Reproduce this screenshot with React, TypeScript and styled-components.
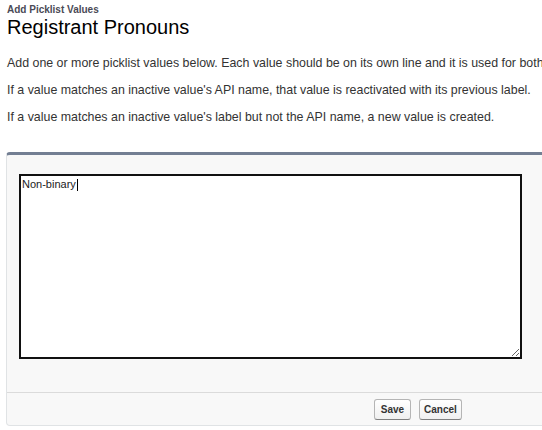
import { FC } from 'react';
import styled, { createGlobalStyle } from 'styled-components';

const GlobalStyle = createGlobalStyle`
  html, body {
    margin: 0;
    padding: 0;
    background: #fff;
  }
  body {
    font-family: 'Liberation Sans', Arial, sans-serif;
    font-size: 12px;
    color: #333;
    overflow: hidden;
  }
`;

const Page = styled.div`
  width: 542px;
  height: 430px;
  overflow: hidden;
`;

const Header = styled.div`
  padding: 4px 0 0 7px;
`;

const PageType = styled.h1`
  margin: 0;
  font-size: 10px;
  font-weight: bold;
  line-height: 11px;
  color: #4a4a56;
`;

const PageTitle = styled.h2`
  margin: 0;
  font-size: 20px;
  font-weight: normal;
  line-height: 24px;
  color: #000;
`;

const Intro = styled.div`
  padding: 17px 0 0 7px;
`;

const Line = styled.p`
  margin: 0 0 13px;
  line-height: 14px;
  font-size: 12.4px;
  white-space: nowrap;
  color: #333;

  &:last-child {
    margin-bottom: 0;
  }
`;

const Panel = styled.div`
  margin: 28px -20px 0 6px;
  background: #f8f8f8;
  border: 1px solid #e0e3e5;
  border-top: 3px solid #737f93;
  border-radius: 4px;
`;

const PanelBody = styled.div`
  padding: 19px 12px 33px;
  border-bottom: 1px solid #dbdbdb;
`;

const Field = styled.div`
  position: relative;
  width: 503px;
`;

const ValuesInput = styled.textarea`
  display: block;
  box-sizing: border-box;
  width: 503px;
  height: 185px;
  margin: 0;
  padding: 2px 1px;
  border: 2px solid #111;
  font-family: 'Liberation Sans', Arial, sans-serif;
  font-size: 11px;
  color: #222;
  background: #fff;
  outline: none;
  resize: both;
`;

const Caret = styled.span`
  position: absolute;
  left: 58px;
  top: 5px;
  width: 1px;
  height: 12px;
  background: #000;
`;

const Footer = styled.div`
  display: flex;
  gap: 8px;
  padding: 6px 0 5px 367px;
`;

const Button = styled.button<{ $min?: number }>`
  box-sizing: border-box;
  height: 21px;
  min-width: ${(p) => p.$min ?? 0}px;
  padding: 0 4px;
  border: 1px solid #b5b5b5;
  border-bottom-color: #7f7f7f;
  border-radius: 3px;
  background: linear-gradient(#fff, #f0f0f0);
  font-family: 'Liberation Sans', Arial, sans-serif;
  font-size: 10px;
  font-weight: bold;
  color: #333;
`;

const App: FC = () => {
  return (
    <Page>
      <GlobalStyle />
      <Header>
        <PageType>Add Picklist Values</PageType>
        <PageTitle>Registrant Pronouns</PageTitle>
      </Header>
      <Intro>
        <Line>
          Add one or more picklist values below. Each value should be on its own line and it is used for both the label and the API name.
        </Line>
        <Line>If a value matches an inactive value's API name, that value is reactivated with its previous label.</Line>
        <Line>If a value matches an inactive value's label but not the API name, a new value is created.</Line>
      </Intro>
      <Panel>
        <PanelBody>
          <Field>
            <ValuesInput defaultValue="Non-binary" spellCheck={false} />
            <Caret />
          </Field>
        </PanelBody>
        <Footer>
          <Button $min={37}>Save</Button>
          <Button>Cancel</Button>
        </Footer>
      </Panel>
    </Page>
  );
};

export default App;
